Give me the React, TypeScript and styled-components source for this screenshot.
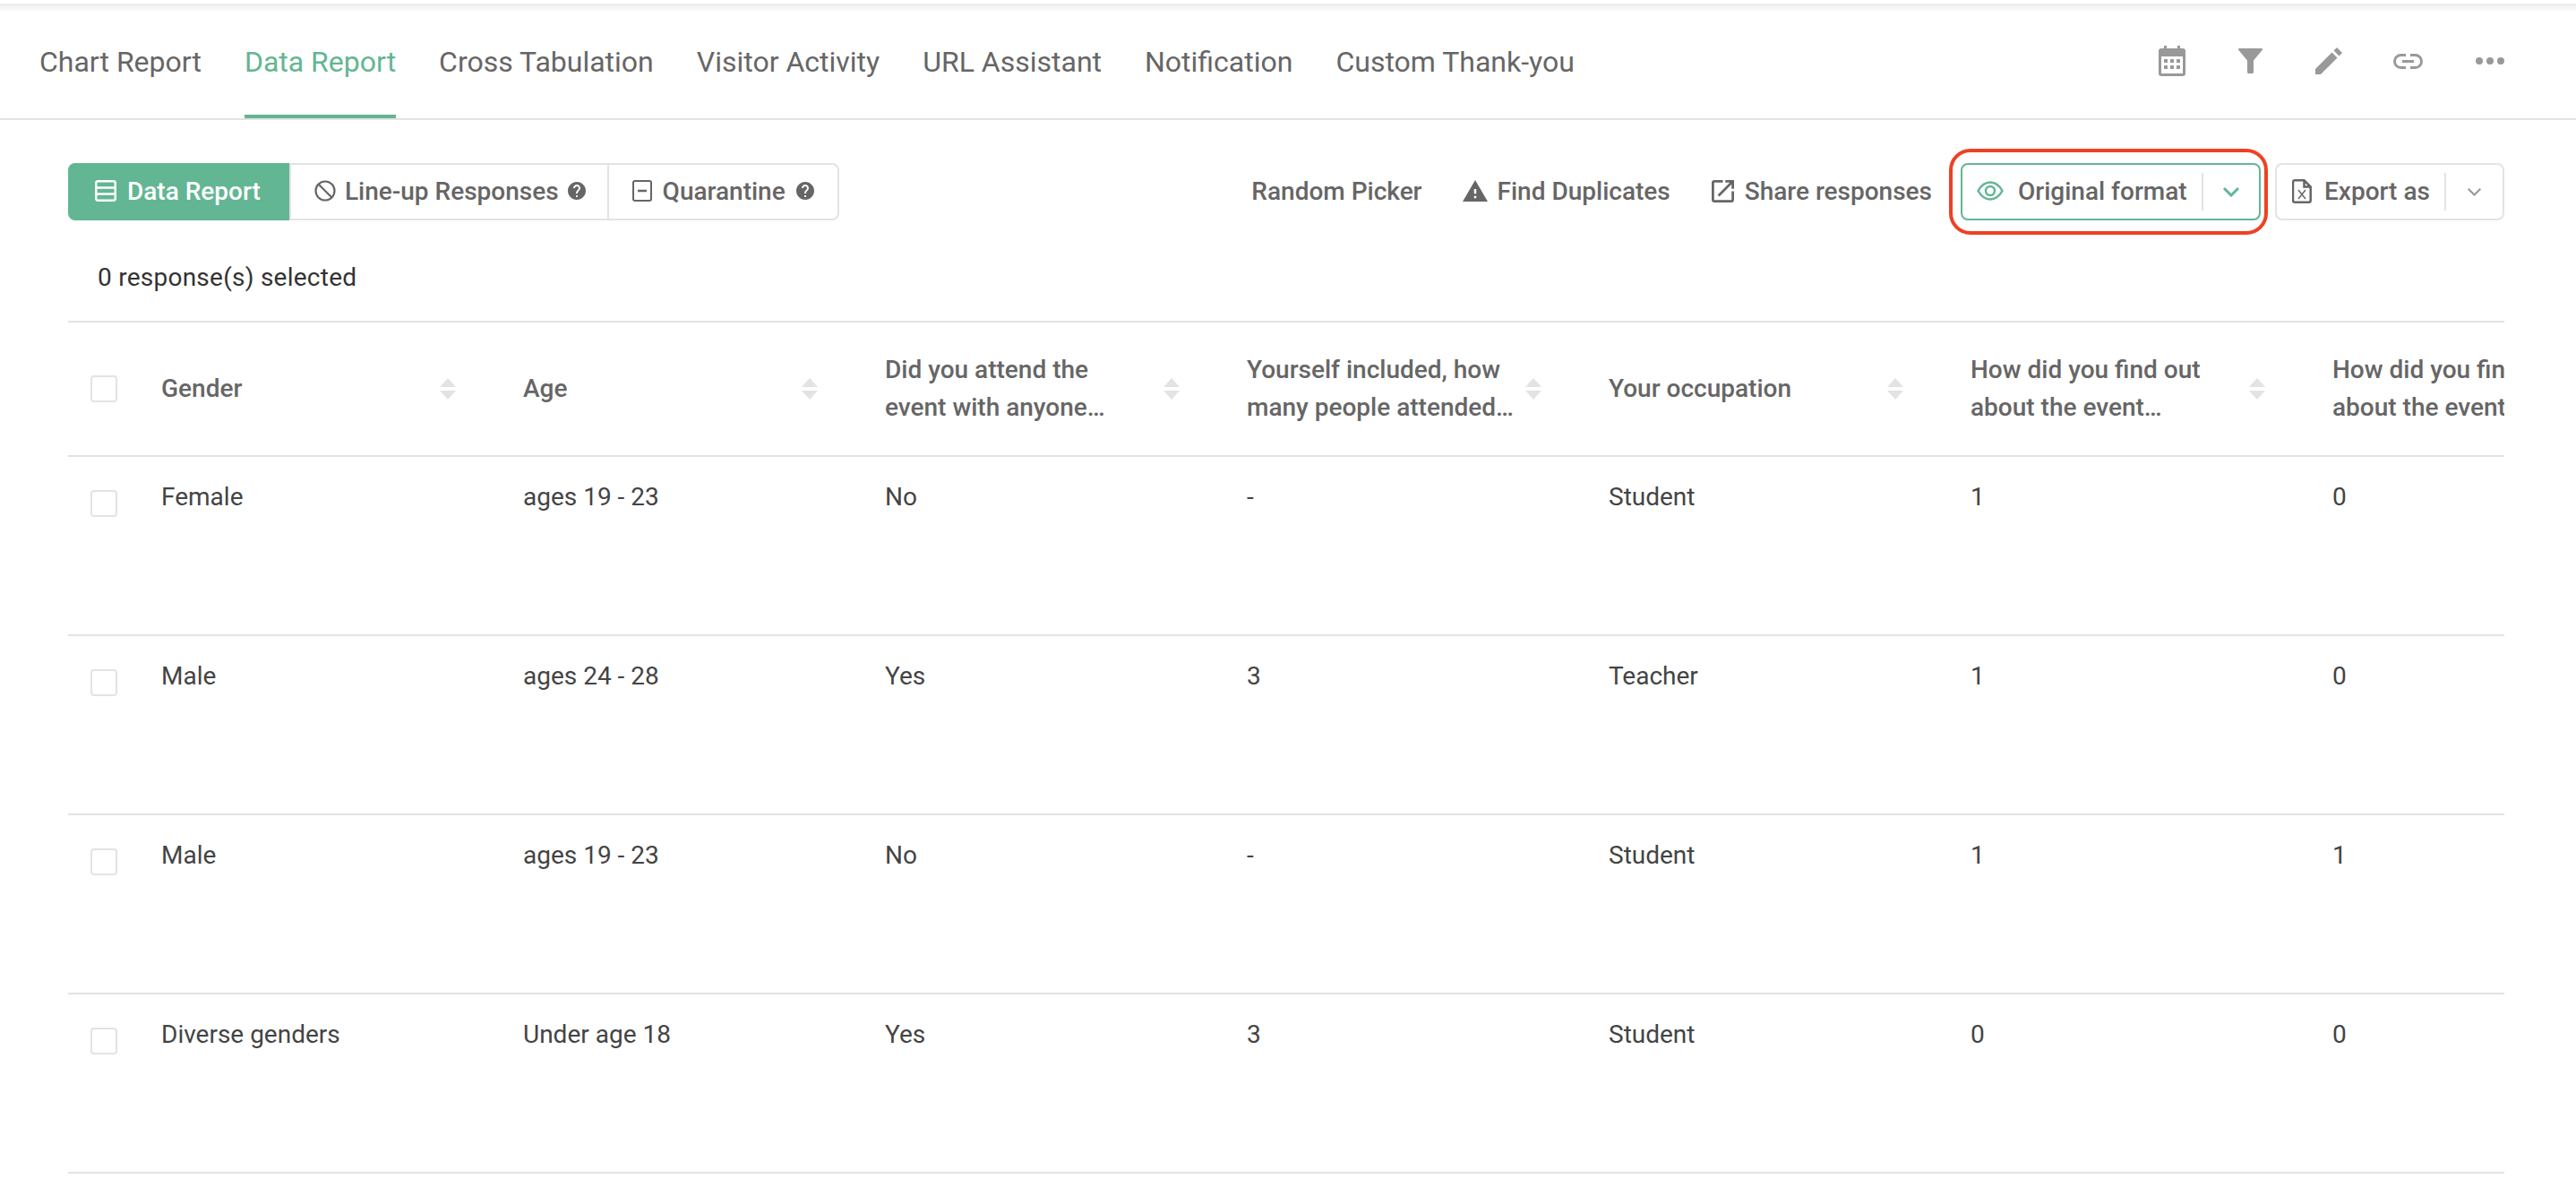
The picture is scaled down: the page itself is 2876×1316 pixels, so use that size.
import React from "react";
import styled, { createGlobalStyle } from "styled-components";

const GREEN = "#63b693";
const LINE = "#e3e3e3";

const GlobalStyle = createGlobalStyle`
  html, body {
    margin: 0;
    padding: 0;
    background: #fff;
    overflow: hidden;
  }
  body {
    font-family: Roboto, "Liberation Sans", sans-serif;
    color: #666;
  }
  * {
    box-sizing: border-box;
  }
`;

const Page = styled.div`
  width: 2876px;
  height: 1316px;
  padding-top: 4px;
`;

const Nav = styled.nav`
  display: flex;
  align-items: stretch;
  justify-content: space-between;
  height: 130px;
  padding: 0 80px 0 44px;
  border-bottom: 2px solid ${LINE};
  background: linear-gradient(#ebebeb, #fff 10px);
`;

const Tabs = styled.div`
  display: flex;
  gap: 48px;
`;

const Tab = styled.a<{ $active?: boolean }>`
  display: flex;
  align-items: center;
  height: 128px;
  padding-top: 6px;
  font-size: 32px;
  color: ${(p) => (p.$active ? GREEN : "#666")};
  border-bottom: 4px solid ${(p) => (p.$active ? GREEN : "transparent")};
`;

const NavIcons = styled.div`
  display: flex;
  align-items: center;
  gap: 59px;
  color: #999;
`;

const Content = styled.main`
  padding: 48px 80px 0 76px;
`;

const Toolbar = styled.div`
  display: flex;
  align-items: center;
  justify-content: space-between;
  height: 64px;
`;

const Segments = styled.div`
  display: flex;
  height: 64px;
  border: 2px solid ${LINE};
  border-radius: 8px;
`;

const Segment = styled.div<{ $active?: boolean; $pad: string; $gap: number }>`
  display: flex;
  align-items: center;
  gap: ${(p) => p.$gap}px;
  margin: ${(p) => (p.$active ? "-2px 0 -2px -2px" : "0")};
  padding: ${(p) => p.$pad};
  font-size: 28px;
  font-weight: 500;
  color: ${(p) => (p.$active ? "#fff" : "#666")};
  background: ${(p) => (p.$active ? GREEN : "transparent")};
  border-radius: ${(p) => (p.$active ? "8px 0 0 8px" : "0")};
  & + & {
    border-left: 2px solid ${LINE};
  }
`;

const Actions = styled.div`
  display: flex;
  align-items: center;
`;

const ActionLink = styled.a<{ $gap: number; $iconGap?: number }>`
  display: flex;
  align-items: center;
  gap: ${(p) => p.$iconGap ?? 12}px;
  margin-right: ${(p) => p.$gap}px;
  padding-bottom: 2px;
  font-size: 28px;
  font-weight: 500;
  color: #666;
`;

const SplitButton = styled.div<{ $on?: boolean; $width: number; $after?: number }>`
  position: relative;
  display: flex;
  align-items: center;
  width: ${(p) => p.$width}px;
  height: 64px;
  margin-right: ${(p) => p.$after ?? 0}px;
  border: 2px solid ${(p) => (p.$on ? GREEN : LINE)};
  border-radius: 8px;
  font-size: 28px;
  font-weight: 500;
  color: #666;
`;

const SplitLabel = styled.div<{ $gap: number; $pad: number }>`
  display: flex;
  align-items: center;
  flex: 1;
  gap: ${(p) => p.$gap}px;
  padding: 0 0 2px ${(p) => p.$pad}px;
`;

const SplitDivider = styled.span`
  width: 2px;
  height: 42px;
  background: ${LINE};
`;

const SplitCaret = styled.div<{ $width: number; $color: string }>`
  display: flex;
  align-items: center;
  justify-content: center;
  width: ${(p) => p.$width}px;
  color: ${(p) => p.$color};
`;

// hand-drawn annotation around the active format button
const Highlight = styled.span`
  position: absolute;
  top: -18px;
  left: -15px;
  right: -10px;
  bottom: -18px;
  border: 4px solid #ee4123;
  border-radius: 24px;
  pointer-events: none;
`;

const Selected = styled.div`
  margin-top: 43px;
  margin-bottom: 27px;
  padding-left: 33px;
  font-size: 28px;
  line-height: 42px;
  letter-spacing: 0.25px;
  color: #333;
`;

const Table = styled.div`
  width: 2720px;
  overflow: hidden;
  border-top: 2px solid ${LINE};
`;

const Row = styled.div<{ $head?: boolean }>`
  display: grid;
  grid-template-columns: 104px repeat(7, 404px);
  width: 2932px;
  height: ${(p) => (p.$head ? 150 : 200)}px;
  align-items: ${(p) => (p.$head ? "center" : "start")};
  border-bottom: 2px solid ${LINE};
`;

const CheckCell = styled.div<{ $head?: boolean }>`
  padding: ${(p) => (p.$head ? "0" : "37px")} 0 0 25px;
`;

const Check = styled.span`
  display: block;
  width: 30px;
  height: 30px;
  border: 2px solid ${LINE};
  border-radius: 4px;
`;

const HeadCell = styled.div`
  display: flex;
  align-items: center;
  padding-right: 104px;
  position: relative;
  font-size: 28px;
  font-weight: 500;
  line-height: 42px;
  color: #666;
`;

const SortSlot = styled.span`
  position: absolute;
  left: 311px;
  top: 50%;
  height: 24px;
  margin-top: -12px;
  color: ${LINE};
`;

const Cell = styled.div`
  padding-top: 24px;
  font-size: 28px;
  line-height: 42px;
  color: #444;
`;

const Icon = styled.svg`
  display: block;
  flex: none;
`;

const EyeSvg = styled(Icon)`
  color: ${GREEN};
`;

const LinkSvg = styled(Icon)`
  margin-left: -2px;
`;

const CalendarIcon = () => (
  <Icon width="30" height="34" viewBox="0 0 30 34">
    <path
      fill="currentColor"
      fillRule="evenodd"
      d="M6 0h3v3h12V0h3v3h3a3 3 0 0 1 3 3v25a3 3 0 0 1-3 3H3a3 3 0 0 1-3-3V6a3 3 0 0 1 3-3h3V0zM3 12v19h24V12H3z"
    />
    <g fill="currentColor">
      <rect x="6" y="15" width="4" height="4" />
      <rect x="13" y="15" width="4" height="4" />
      <rect x="20" y="15" width="4" height="4" />
      <rect x="6" y="22" width="4" height="4" />
      <rect x="13" y="22" width="4" height="4" />
      <rect x="20" y="22" width="4" height="4" />
    </g>
  </Icon>
);

const FunnelIcon = () => (
  <Icon width="27" height="28" viewBox="0 0 27 28">
    <path
      fill="currentColor"
      d="M1 0h25c.9 0 1.3 1 .8 1.7L17 13.5V26.5c0 .8-.7 1.5-1.500 1.500h-4c-.8 0-1.500-.7-1.500-1.500V13.500L.2 1.700C-.3 1 .1 0 1 0z"
    />
  </Icon>
);

const PencilIcon = () => (
  <Icon width="30" height="30" viewBox="0 0 30 30">
    <path fill="currentColor" d="M0 24L18.500 5.500 24.500 11.500 6 30H0z" />
    <path fill="currentColor" d="M20.500 3.500L24 0l6 6-3.500 3.500z" />
  </Icon>
);

const LinkIcon = () => (
  <LinkSvg width="33" height="17" viewBox="0 0 33 17">
    <path
      fill="none"
      stroke="currentColor"
      strokeWidth="3"
      d="M14 1.500H8.500a7 7 0 0 0 0 14H14M19 1.500h5.500a7 7 0 0 1 0 14H19"
    />
    <rect x="10" y="7" width="13" height="3" fill="currentColor" />
  </LinkSvg>
);

const DotsIcon = () => (
  <Icon width="32" height="8" viewBox="0 0 32 8">
    <circle cx="4" cy="4" r="4" fill="currentColor" />
    <circle cx="16" cy="4" r="4" fill="currentColor" />
    <circle cx="28" cy="4" r="4" fill="currentColor" />
  </Icon>
);

const TableIcon = () => (
  <Icon width="24" height="24" viewBox="0 0 24 24">
    <path
      fill="none"
      stroke="currentColor"
      strokeWidth="2.500"
      d="M3.200 1.300h17.600a2 2 0 0 1 2 2v17.400a2 2 0 0 1-2 2H3.200a2 2 0 0 1-2-2V3.300a2 2 0 0 1 2-2zM1.500 8.500h21M1.500 15.500h21"
    />
  </Icon>
);

const BanIcon = () => (
  <Icon width="24" height="24" viewBox="0 0 24 24">
    <circle cx="12" cy="12" r="10.500" fill="none" stroke="currentColor" strokeWidth="2.200" />
    <path d="M5 5l14 14" stroke="currentColor" strokeWidth="2.200" />
  </Icon>
);

const MinusBoxIcon = () => (
  <Icon width="22" height="24" viewBox="0 0 22 24">
    <rect x="1" y="1" width="20" height="22" rx="2" fill="none" stroke="currentColor" strokeWidth="2" />
    <path d="M6 12h10" stroke="currentColor" strokeWidth="2.500" />
  </Icon>
);

const HelpIcon = () => (
  <Icon width="20" height="20" viewBox="2 2 20 20">
    <path
      fill="currentColor"
      d="M12 2C6.480 2 2 6.480 2 12s4.480 10 10 10 10-4.480 10-10S17.520 2 12 2zm1 17h-2v-2h2v2zm2.070-7.750l-.9.920C13.450 12.900 13 13.500 13 15h-2v-.5c0-1.100.45-2.100 1.170-2.830l1.240-1.260c.37-.36.59-.86.59-1.410 0-1.100-.9-2-2-2s-2 .9-2 2H8c0-2.210 1.790-4 4-4s4 1.790 4 4c0 .88-.36 1.680-.93 2.250z"
    />
  </Icon>
);

const WarningIcon = () => (
  <Icon width="28" height="26" viewBox="1 2 22 19">
    <path fill="currentColor" d="M1 21h22L12 2 1 21zm12-3h-2v-2h2v2zm0-4h-2v-4h2v4z" />
  </Icon>
);

const ShareIcon = () => (
  <Icon width="25" height="25" viewBox="3 3 18 18">
    <path
      fill="currentColor"
      d="M19 19H5V5h7V3H5c-1.110 0-2 .9-2 2v14c0 1.100.89 2 2 2h14c1.100 0 2-.9 2-2v-7h-2v7zM14 3v2h3.590l-9.830 9.830 1.410 1.410L19 6.410V10h2V3h-7z"
    />
  </Icon>
);

const EyeIcon = () => (
  <EyeSvg width="30" height="22" viewBox="0 0 30 22">
    <path
      fill="none"
      stroke="currentColor"
      strokeWidth="2.500"
      d="M1.500 11C5 4.700 9.500 1.500 15 1.500S25 4.700 28.500 11C25 17.300 20.500 20.500 15 20.500S5 17.300 1.500 11z"
    />
    <circle cx="15" cy="11" r="5" fill="none" stroke="currentColor" strokeWidth="2.500" />
  </EyeSvg>
);

const SheetIcon = () => (
  <Icon width="22" height="27" viewBox="0 0 22 27">
    <path
      fill="none"
      stroke="currentColor"
      strokeWidth="2.500"
      d="M3 1.300h10.500l7.200 7.200V23.700a2 2 0 0 1-2 2H3a2 2 0 0 1-2-2V3.300a2 2 0 0 1 2-2zM13.500 1.300V8.500h7.200"
    />
    <path d="M7 12l8 10M15 12L7 22" stroke="currentColor" strokeWidth="1.500" fill="none" />
  </Icon>
);

const ChevronIcon = ({ weight, size }: { weight: number; size: number }) => (
  <Icon width={size} height={size * 0.6} viewBox="0 0 20 12">
    <path d="M2 2l8 8 8-8" fill="none" stroke="currentColor" strokeWidth={weight} />
  </Icon>
);

const SortIcon = () => (
  <Icon width="18" height="24" viewBox="0 0 18 24">
    <path fill="currentColor" d="M9 0l9 10H0zM0 14h18l-9 10z" />
  </Icon>
);

const navTabs = [
  "Chart Report",
  "Data Report",
  "Cross Tabulation",
  "Visitor Activity",
  "URL Assistant",
  "Notification",
  "Custom Thank-you",
];

const columns = [
  "Gender",
  "Age",
  "Did you attend the event with anyone…",
  "Yourself included, how many people attended…",
  "Your occupation",
  "How did you find out about the event…",
  "How did you find out about the event…",
];

const rows = [
  ["Female", "ages 19 - 23", "No", "-", "Student", "1", "0"],
  ["Male", "ages 24 - 28", "Yes", "3", "Teacher", "1", "0"],
  ["Male", "ages 19 - 23", "No", "-", "Student", "1", "1"],
  ["Diverse genders", "Under age 18", "Yes", "3", "Student", "0", "0"],
];

const App: React.FC = () => {
  return (
    <Page>
      <GlobalStyle />
      <Nav>
        <Tabs>
          {navTabs.map((tab) => (
            <Tab key={tab} $active={tab === "Data Report"}>
              {tab}
            </Tab>
          ))}
        </Tabs>
        <NavIcons>
          <CalendarIcon />
          <FunnelIcon />
          <PencilIcon />
          <LinkIcon />
          <DotsIcon />
        </NavIcons>
      </Nav>

      <Content>
        <Toolbar>
          <Segments>
            <Segment $active $pad="0 32px 2px 30px" $gap={12}>
              <TableIcon />
              Data Report
            </Segment>
            <Segment $pad="0 24px 2px 26px" $gap={10}>
              <BanIcon />
              Line-up Responses
              <HelpIcon />
            </Segment>
            <Segment $pad="0 26px 2px" $gap={12}>
              <MinusBoxIcon />
              Quarantine
              <HelpIcon />
            </Segment>
          </Segments>

          <Actions>
            <ActionLink $gap={45}>Random Picker</ActionLink>
            <ActionLink $gap={46} $iconGap={11}>
              <WarningIcon />
              Find Duplicates
            </ActionLink>
            <ActionLink $gap={32}>
              <ShareIcon />
              Share responses
            </ActionLink>
            <SplitButton $on $width={335} $after={16}>
              <Highlight />
              <SplitLabel $gap={16} $pad={16}>
                <EyeIcon />
                Original format
              </SplitLabel>
              <SplitDivider />
              <SplitCaret $width={62} $color={GREEN}>
                <ChevronIcon weight={3} size={20} />
              </SplitCaret>
            </SplitButton>
            <SplitButton $width={256}>
              <SplitLabel $gap={14} $pad={17}>
                <SheetIcon />
                Export as
              </SplitLabel>
              <SplitDivider />
              <SplitCaret $width={63} $color="#999">
                <ChevronIcon weight={2.5} size={17} />
              </SplitCaret>
            </SplitButton>
          </Actions>
        </Toolbar>

        <Selected>0 response(s) selected</Selected>

        <Table>
          <Row $head>
            <CheckCell $head>
              <Check />
            </CheckCell>
            {columns.map((col, i) => (
              <HeadCell key={i}>
                {col}
                <SortSlot>
                  <SortIcon />
                </SortSlot>
              </HeadCell>
            ))}
          </Row>
          {rows.map((row, i) => (
            <Row key={i}>
              <CheckCell>
                <Check />
              </CheckCell>
              {row.map((value, j) => (
                <Cell key={j}>{value}</Cell>
              ))}
            </Row>
          ))}
        </Table>
      </Content>
    </Page>
  );
};

export default App;
